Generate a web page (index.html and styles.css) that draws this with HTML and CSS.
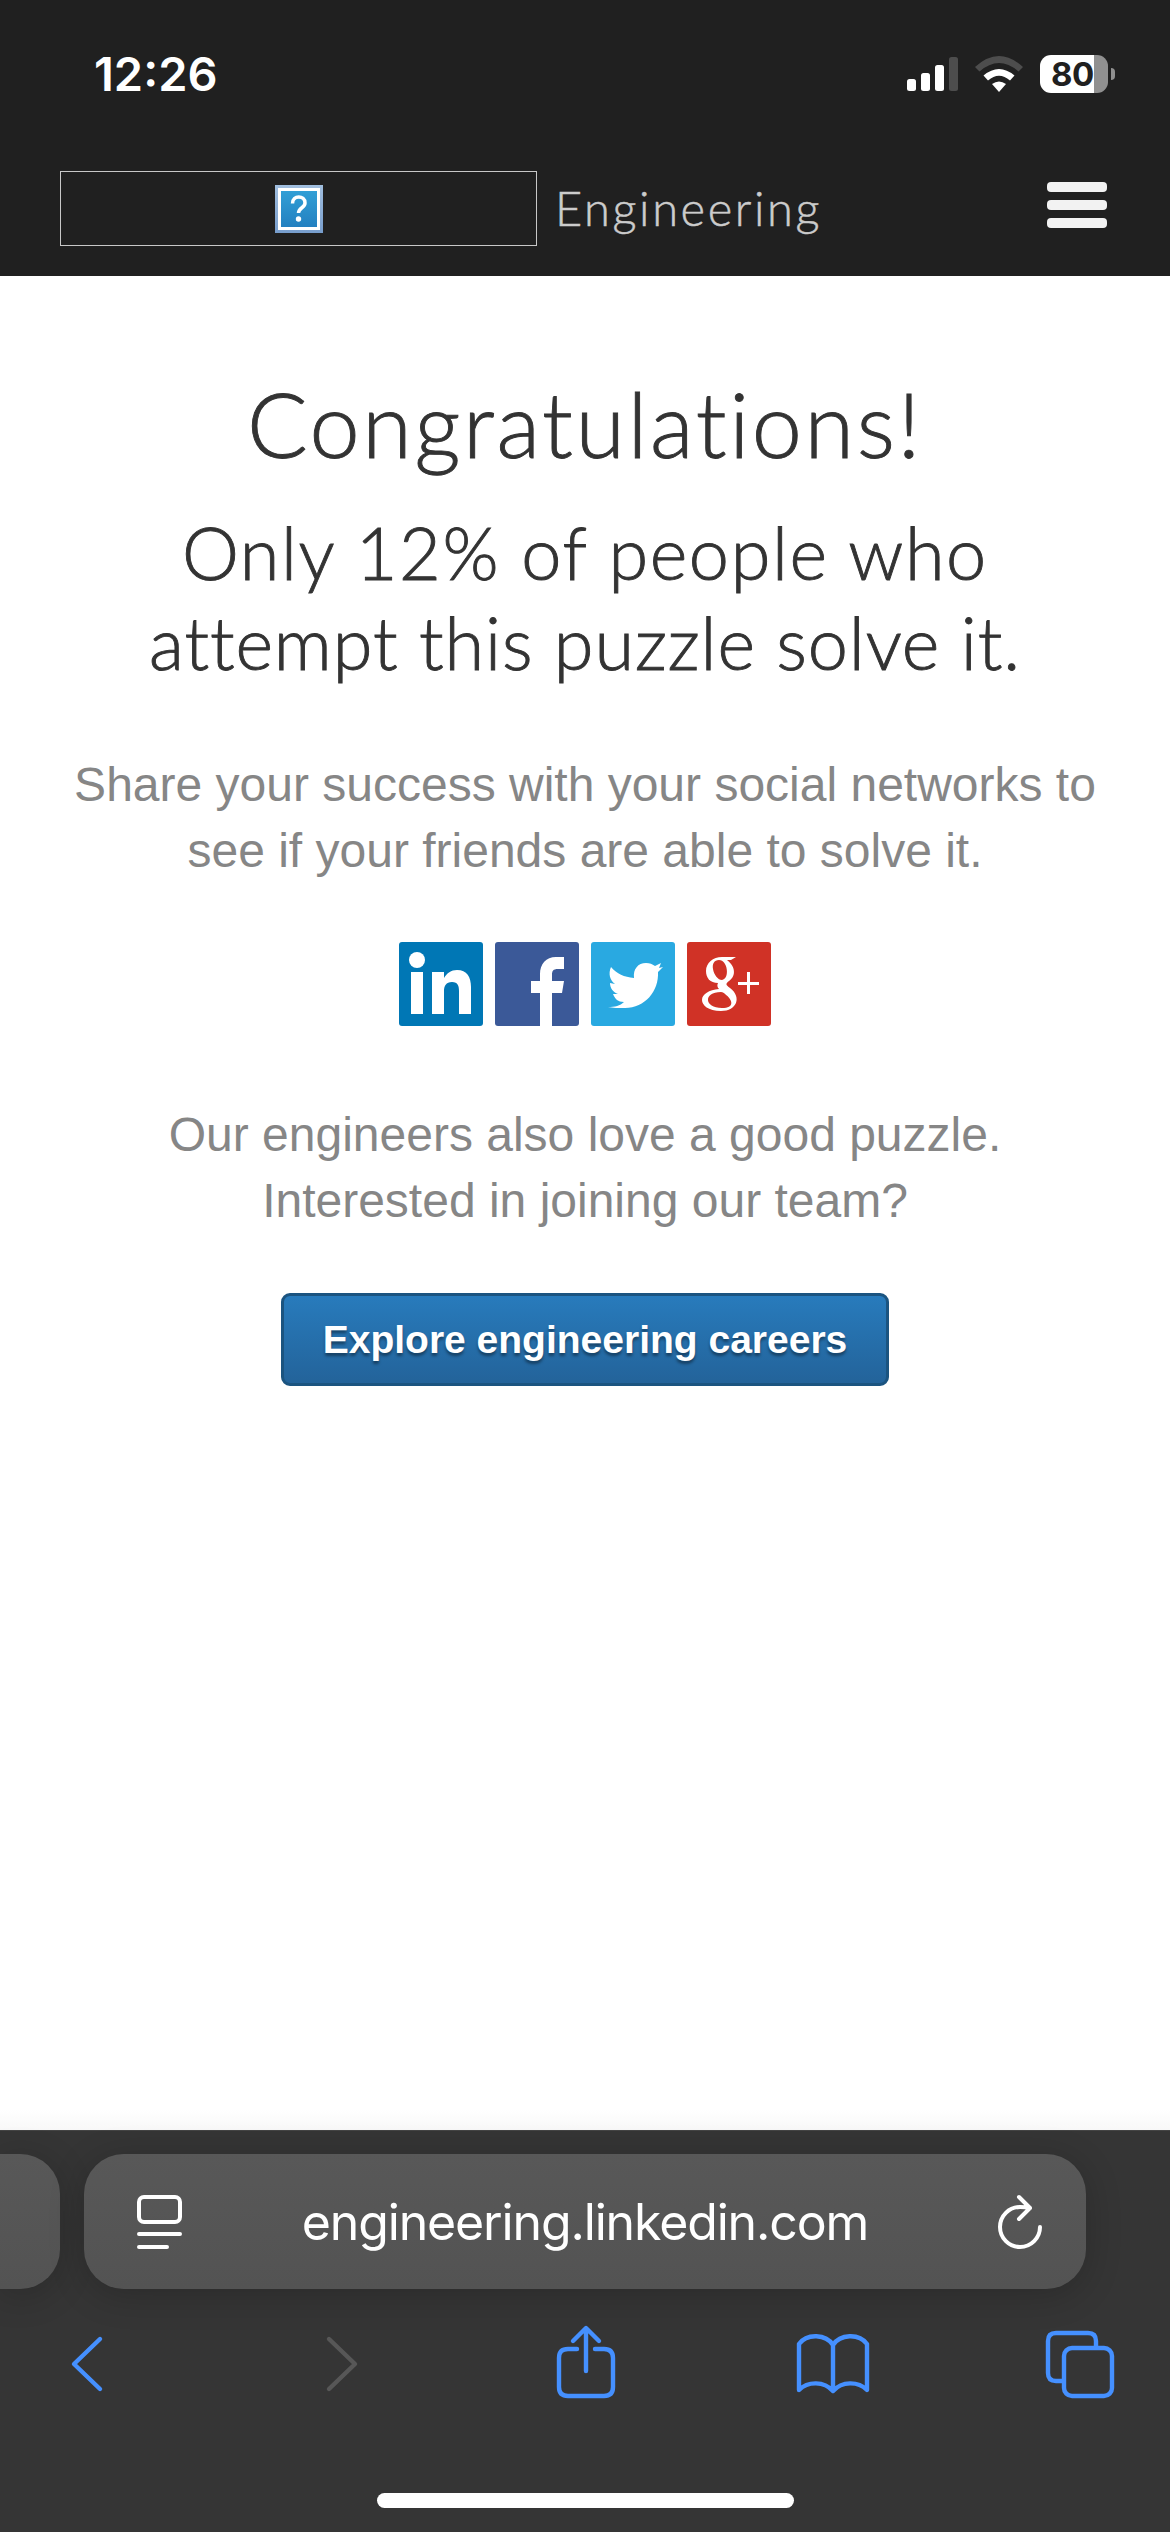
FILE: index.html
```html
<!DOCTYPE html>
<html lang="en">
<head>
<meta charset="utf-8">
<title>LinkedIn Engineering</title>
<link rel="stylesheet" href="styles.css">
</head>
<body>
<div class="screen">
  <header class="top">
    <div class="status">
      <span class="clock">12:26</span>
      <div class="indicators">
        <svg class="signal" viewBox="0 0 51 34"><g fill="#fff"><rect y="22" width="9" height="12" rx="2.5"/><rect x="14" y="16" width="9" height="18" rx="2.5"/><rect x="28" y="8" width="9" height="26" rx="2.5"/></g><rect x="42" width="9" height="34" rx="2.5" fill="#4d4d4d"/></svg>
        <svg class="wifi" viewBox="0 0 48 36"><path d="M0 11Q24-11 48 11L43.500 15.500Q24-1.500 4.500 15.500Z" fill="#4d4d4d"/><path d="M8.500 19.500Q24 6.500 39.500 19.500L35 24.500Q24 15 13 24.500Z" fill="#fff"/><path d="M17 28Q24 23 31 28L24 36Z" fill="#fff"/></svg>
        <div class="battery"><span class="cell">80</span><span class="nub"></span></div>
      </div>
    </div>
    <nav class="nav">
      <div class="logo">
        <svg width="48" height="48" viewBox="0 0 48 48"><defs><linearGradient id="frame" x2="0" y2="1"><stop stop-color="#a1bede"/><stop offset="1" stop-color="#779dcc"/></linearGradient><linearGradient id="fill" x2="0" y2="1"><stop stop-color="#319fd6"/><stop offset="1" stop-color="#2380c0"/></linearGradient></defs><path d="M0 0h48v48H0z" fill="url(#frame)"/><path d="M3 3h42v42H3z" fill="#fff"/><path d="M6 6h36v36H6z" fill="url(#fill)"/><path d="M17.500 18.500C17.500 9.500 30 10 30 18C30 23 23.500 22.500 23.500 28" fill="none" stroke="#fff" stroke-width="3.500"/><circle cx="23.500" cy="34" r="2.700" fill="#fff"/></svg>
      </div>
      <span class="brand">Engineering</span>
      <div class="menu"><i></i><i></i><i></i></div>
    </nav>
  </header>
  <main class="content">
    <h1>Congratulations!</h1>
    <h2><span class="line-a">Only 12% of people who</span><br><span class="line-b">attempt this puzzle solve it.</span></h2>
    <p class="share">Share your success with your social networks to<br>see if your friends are able to solve it.</p>
    <div class="social">
      <svg viewBox="0 0 84 84"><rect width="84" height="84" rx="3" fill="#0077b5"/><g fill="#fff"><circle cx="18" cy="18" r="8"/><path d="M12 30h12v42H12zM33 30h12v6c3-5 7-8 13-8 10 0 14 7 14 17v27H60V49c0-5-1-9-7-9s-8 4-8 9v23H33z"/></g></svg>
      <svg viewBox="0 0 84 84"><rect width="84" height="84" rx="3" fill="#3b5998"/><path d="M45 84V51h-9V39h9v-7c0-10 6-17 16-17h8v12h-6c-5 0-6 2-6 6v6h12l-2 12H57v33z" fill="#fff"/></svg>
      <svg viewBox="0 0 84 84"><rect width="84" height="84" rx="3" fill="#29a9e1"/><path d="M17 65c7 0 12-1 16-5-6 0-9-3-11-8h5c-5-2-8-6-8-11l5 1c-5-4-7-10-4-17 6 7 13 10 23 11-1-9 4-15 12-15 4 0 6 1 9 3l6-3-2 5 4-1-5 5c1 19-13 36-33 36-7 0-12 0-17-1Z" fill="#fff"/></svg>
      <svg viewBox="0 0 84 84"><rect width="84" height="84" rx="3" fill="#d03226"/><g fill="#fff"><path fill-rule="evenodd" d="M49 15l-5 3h-4c10 8 8 17 2 21-4 3-3 4 1 7 12 9 7 23-9 23-13 0-19-6-19-11 0-6 7-10 17-11-2-2-2-4-1-6-8 0-12-5-12-12 0-8 7-14 16-14ZM32 18c-5 0-7 4-6 9 1 6 5 11 9 11 8-1 6-20-3-20ZM34 50c-18 0-17 16 1 16 13 0 11-8 3-14-1-1-2-2-4-2Z"/><path d="M60 30h3v10h9v3h-9v9h-3v-9h-9v-3h9z"/></g></svg>
    </div>
    <p class="join">Our engineers also love a good puzzle.<br>Interested in joining our team?</p>
    <a class="cta">Explore engineering careers</a>
  </main>
  <footer class="browser">
    <div class="tabs">
      <div class="tab previous"></div>
      <div class="tab address">
        <svg width="45" height="54" viewBox="0 0 45 54" class="stroke"><rect x="2" y="2" width="41" height="25" rx="5"/><path d="M2 39h41M2 52h28"/></svg>
        <span class="url">engineering.linkedin.com</span>
        <svg width="45" height="54" viewBox="0 0 45 54" class="stroke"><path d="M42 32A20 20 0 1 1 22 12Q27 12 32 13M21 2l11 11-11 11"/></svg>
      </div>
    </div>
    <div class="tools">
      <svg class="back" width="32" height="54" viewBox="0 0 32 54"><path d="M29 2L3 27l26 25"/></svg>
      <svg class="forward" width="32" height="54" viewBox="0 0 32 54"><path d="M3 2l26 25L3 52"/></svg>
      <svg class="upload" width="58" height="72" viewBox="0 0 58 72"><path d="M20 23h-9q-9 0-9 9v29q0 9 9 9h36q9 0 9-9V32q0-9-9-9h-9M29 45V3M16 15L29 2l13 13"/></svg>
      <svg class="book" width="72" height="60" viewBox="0 0 72 60"><path d="M36 11C29 0 10-1 2 10v46c9-9 25-9 34 1 9-10 25-10 34-1V10C62-1 43 0 36 11v46"/></svg>
      <svg width="68" height="67" viewBox="0 0 68 67"><path d="M16 50h-6q-8 0-8-8V10q0-8 8-8h32q8 0 8 8v5"/><rect x="18" y="17" width="48" height="48" rx="8"/></svg>
    </div>
    <div class="home"></div>
  </footer>
</div>
</body>
</html>
```
FILE: styles.css
```css
* { box-sizing: border-box; }
body { margin: 0; background: #fff; }
svg { display: block; flex: none; overflow: visible; }
.screen { width: 1170px; height: 2532px; display: flex; flex-direction: column; overflow: hidden; }
.top { height: 276px; background: #202020; flex: none; }
.status { height: 148px; display: flex; justify-content: space-between; padding: 0 55px 0 94px; align-items: center; }
.clock { font: 600 47px/60px Inter, sans-serif; color: #fff; letter-spacing: 0; }
.indicators { display: flex; align-items: center; }
.signal { width: 51px; height: 34px; margin-right: 17px; }
.wifi { width: 48px; height: 36px; margin-right: 17px; }
.battery { display: flex; align-items: center; gap: 3px; }
.cell { width: 68px; height: 38px; border-radius: 11px; background: linear-gradient(90deg, #fff 54px, #909090 54px); font: 700 33px/38px Inter, sans-serif; letter-spacing: -.5px; color: #202020; padding-left: 11px; }
.nub { width: 4px; height: 12px; border-radius: 0 5px 5px 0; background: #909090; }
.nav { display: flex; padding: 23px 63px 0 60px; }
.logo { width: 477px; height: 75px; border: 1px solid #c8c8c8; display: flex; padding: 13px 0 0 214px; }
.brand { font: 300 47px/75px Lato, sans-serif; letter-spacing: 2.6px; color: #ccc; -webkit-text-stroke: .5px #ccc; margin-left: 18px; flex: 1; }
.menu { display: flex; flex-direction: column; gap: 8px; padding-top: 11px; }
.menu i { width: 60px; height: 10px; border-radius: 4px; background: #f2f2f2; }
.content { height: 1854px; flex: none; display: flex; flex-direction: column; align-items: center; text-align: center; background: linear-gradient(#fff 1834px, #f8f8f8); }
h1, h2, p { margin: 0; white-space: nowrap; color: #333; }
h1, h2 { -webkit-text-stroke: .9px #333; }
h1 { font: 300 90px/108px Lato, sans-serif; margin-top: 93px; letter-spacing: 2.6px; }
h2 { font: 300 72px/90px Lato, sans-serif; margin-top: 30px; }
.line-a { letter-spacing: 1.6px; }
.line-b { letter-spacing: .9px; }
p { font: 48px/66px "Liberation Sans", sans-serif; color: #868686; }
.share { margin-top: 65px; }
.social { display: flex; gap: 12px; margin-top: 58px; }
.social svg { width: 84px; height: 84px; }
.join { margin-top: 76px; }
.cta { width: 608px; height: 93px; margin-top: 59px; border: 3px solid #1b5480; border-radius: 9px; background: linear-gradient(#287bbc, #23639a); color: #fff; font: 700 39px/87px "Liberation Sans", sans-serif; text-shadow: 0 3px 3px rgba(0,0,0,.4); white-space: nowrap; }
.browser { height: 402px; flex: none; background: #353535; border-top: 1px solid #444; display: flex; flex-direction: column; align-items: center; }
.tabs { width: 1170px; display: flex; gap: 24px; padding-top: 23px; }
.tab { height: 135px; background: linear-gradient(#585858, #535353); box-shadow: 0 6px 36px rgba(0,0,0,.2); border-radius: 40px; }
.previous { width: 60px; border-radius: 0 40px 40px 0; }
.address { width: 1002px; display: flex; align-items: center; justify-content: space-between; padding: 0 43px 0 53px; }
.url { font: 400 50px/60px Inter, sans-serif; color: #fff; letter-spacing: -1.15px; margin-right: 10px; }
.stroke { fill: none; stroke: #fff; stroke-width: 4; stroke-linecap: round; stroke-linejoin: round; }
.tools { width: 1170px; height: 76px; display: flex; align-items: center; padding-left: 71px; margin-top: 37px; }
.tools svg { fill: none; stroke: #4590ff; stroke-width: 4.4; stroke-linecap: round; stroke-linejoin: round; }
.tools .back { margin-right: 223px; }
.tools .forward { stroke: #575757; margin-right: 199px; }
.tools .upload { align-self: flex-start; margin-right: 182px; }
.tools .book { margin-right: 177px; }
.home { width: 417px; height: 15px; border-radius: 8px; background: #fff; margin-top: 91px; }
```
